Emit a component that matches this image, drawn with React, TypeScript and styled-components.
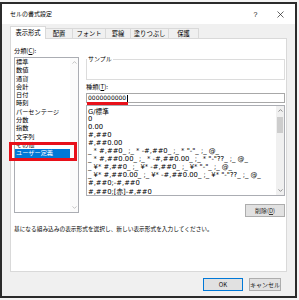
import React from 'react';
import styled, { createGlobalStyle } from 'styled-components';

const JP = `"Noto Sans CJK JP", "Noto Sans", sans-serif`;
const LAT = `"DejaVu Sans", "Noto Sans CJK JP", sans-serif`;

const Global = createGlobalStyle`
  html, body { margin: 0; padding: 0; background: #f4f4f4; }
  body { font-family: ${JP}; color: #000; }
  * { box-sizing: border-box; }
`;

const Screen = styled.div`
  width: 299px;
  height: 300px;
  padding: 2px 2px 2px 0;
  overflow: hidden;
`;

const Frame = styled.div`
  width: 297px;
  height: 296px;
  border: 2px solid #2b2b2b;
  display: flex;
  flex-direction: column;
  background: #f0f0f0;
`;

const TitleBar = styled.div`
  height: 20px;
  flex: none;
  background: #fff;
  display: flex;
  align-items: center;
  padding: 0 2px 0 8px;
`;

const Title = styled.span`
  flex: 1;
  font-size: 6px;
  line-height: 8px;
`;

const TitleButton = styled.div`
  width: 25px;
  height: 20px;
  display: flex;
  align-items: center;
  justify-content: center;
  font-family: "Liberation Sans", sans-serif;
  font-size: 7px;
  color: #111;
`;

const Body = styled.div`
  flex: 1;
  display: flex;
  flex-direction: column;
  padding: 2px 8px 0 8px;
`;

const TabRow = styled.div`
  height: 12px;
  flex: none;
  display: flex;
  align-items: flex-end;
  position: relative;
  z-index: 1;
`;

const Tab = styled.div<{ $active?: boolean; $w: number }>`
  width: ${(p) => p.$w}px;
  height: ${(p) => (p.$active ? 13 : 10)}px;
  margin-bottom: ${(p) => (p.$active ? -1 : 0)}px;
  margin-left: -1px;
  &:first-child { margin-left: 0; }
  background: ${(p) => (p.$active ? '#fff' : '#f0f0f0')};
  border: 1px solid #d9d9d9;
  border-bottom: none;
  display: flex;
  align-items: center;
  justify-content: center;
  font-size: 6.3px;
  line-height: 8px;
  white-space: nowrap;
  position: relative;
  z-index: ${(p) => (p.$active ? 2 : 1)};
`;

const Panel = styled.div`
  height: 234px;
  flex: none;
  background: #fff;
  border: 1px solid #d9d9d9;
  padding: 6px 1px 0 3px;
`;

const Columns = styled.div`
  display: grid;
  grid-template-columns: 65px 199px;
  column-gap: 7px;
  align-items: start;
`;

const Column = styled.div`
  display: flex;
  flex-direction: column;
`;

const FieldLabel = styled.div<{ $mt?: number; $h: number }>`
  margin-top: ${(p) => p.$mt ?? 0}px;
  height: ${(p) => p.$h}px;
  line-height: ${(p) => p.$h}px;
  font-size: 6.2px;
  white-space: nowrap;
`;

const ListBox = styled.div<{ $h: number; $mt: number }>`
  position: relative;
  margin-top: ${(p) => p.$mt}px;
  height: ${(p) => p.$h}px;
  border: 1px solid #abadb3;
  display: flex;
  background: #fff;
`;

const Items = styled.div<{ $pt?: number }>`
  flex: 1;
  min-width: 0;
  overflow: hidden;
  padding-top: ${(p) => p.$pt ?? 0}px;
`;

const CategoryItem = styled.div<{ $selected?: boolean }>`
  height: 8.3px;
  line-height: 8.3px;
  font-size: 6.2px;
  padding-left: 1px;
  white-space: nowrap;
  background: ${(p) => (p.$selected ? '#0078d7' : 'transparent')};
  color: ${(p) => (p.$selected ? '#fff' : '#000')};
`;

const FormatItem = styled.div`
  height: 8px;
  line-height: 8px;
  font-family: ${LAT};
  font-size: 6.8px;
  padding-left: 1px;
  white-space: pre;
`;

const FormatItemJp = styled.span`
  font-family: ${JP};
  font-size: 6.6px;
`;

const ScrollBar = styled.div<{ $track: string }>`
  width: 8px;
  flex: none;
  background: ${(p) => p.$track};
  display: flex;
  flex-direction: column;
`;

const ScrollArrow = styled.div`
  height: 9px;
  flex: none;
  display: flex;
  align-items: center;
  justify-content: center;
`;

const ScrollTrack = styled.div`
  flex: 1;
  padding: 2px 1px 0 1px;
`;

const Thumb = styled.div`
  height: 16px;
  background: #cdcdcd;
`;

const RedBox = styled.div`
  position: absolute;
  left: -6px;
  top: 84px;
  width: 68px;
  height: 19px;
  border: 3px solid #e8101a;
  pointer-events: none;
`;

const SampleBox = styled.div`
  position: relative;
  margin-top: 14px;
  height: 21px;
  border: 1px solid #dcdcdc;
`;

const SampleLegend = styled.span`
  position: absolute;
  top: -5px;
  left: 0;
  padding: 0 1px;
  background: #fff;
  font-size: 6px;
  line-height: 8px;
`;

const InputBox = styled.div`
  position: relative;
  margin-top: 1px;
  height: 10px;
  border: 1px solid #a8a8a8;
  display: flex;
  align-items: center;
  padding-left: 1px;
`;

const InputText = styled.span`
  font-family: ${LAT};
  font-size: 6px;
  line-height: 8px;
`;

const Caret = styled.span`
  width: 1px;
  height: 7px;
  background: #000;
  margin-left: 0.5px;
`;

const RedUnderline = styled.div`
  position: absolute;
  left: 0;
  top: 8px;
  width: 41px;
  height: 3px;
  background: #e8101a;
`;

const Button = styled.div<{ $w: number; $default?: boolean }>`
  width: ${(p) => p.$w}px;
  height: 13px;
  flex: none;
  background: #e1e1e1;
  border: 1px solid ${(p) => (p.$default ? '#0078d7' : '#adadad')};
  display: flex;
  align-items: center;
  justify-content: center;
  font-size: 6px;
  line-height: 8px;
  color: #111;
  white-space: nowrap;
`;

const DeleteButton = styled(Button)`
  align-self: flex-end;
  margin-top: 8px;
  color: #333;
`;

const Description = styled.div`
  margin-top: 8px;
  font-size: 5.7px;
  line-height: 8px;
  white-space: nowrap;
`;

const Footer = styled.div`
  flex: 1;
  display: flex;
  justify-content: flex-end;
  align-items: flex-start;
  gap: 6px;
  padding: 6px 6px 0 0;
`;

const Up = ({ c }: { c: string }) => (
  <svg width="5" height="3" viewBox="0 0 5 3">
    <polyline points="0.5,2.6 2.5,0.6 4.5,2.6" fill="none" stroke={c} strokeWidth="0.8" />
  </svg>
);
const Down = ({ c }: { c: string }) => (
  <svg width="5" height="3" viewBox="0 0 5 3">
    <polyline points="0.5,0.4 2.5,2.4 4.5,0.4" fill="none" stroke={c} strokeWidth="0.8" />
  </svg>
);

const categories = [
  '標準', '数値', '通貨', '会計', '日付', '時刻', 'パーセンテージ',
  '分数', '指数', '文字列', 'その他', 'ユーザー定義',
];

const formats: React.ReactNode[] = [
  <>G/<FormatItemJp>標準</FormatItemJp></>,
  '0',
  '0.00',
  '#,##0',
  '#,##0.00',
  '_ * #,##0_ ;_ * -#,##0_ ;_ * "-"_ ;_ @_ ',
  '_ * #,##0.00_ ;_ * -#,##0.00_ ;_ * "-"??_ ;_ @_ ',
  '_ ¥* #,##0_ ;_ ¥* -#,##0_ ;_ ¥* "-"_ ;_ @_ ',
  '_ ¥* #,##0.00_ ;_ ¥* -#,##0.00_ ;_ ¥* "-"??_ ;_ @_ ',
  '#,##0;-#,##0',
  <>#,##0;[<FormatItemJp>赤</FormatItemJp>]-#,##0</>,
];

const tabs = [
  { label: '表示形式', w: 36, active: true },
  { label: '配置', w: 28 },
  { label: 'フォント', w: 34 },
  { label: '罫線', w: 26 },
  { label: '塗りつぶし', w: 39 },
  { label: '保護', w: 31 },
];

export default function App() {
  return (
    <>
      <Global />
      <Screen>
        <Frame>
          <TitleBar>
            <Title>セルの書式設定</Title>
            <TitleButton>?</TitleButton>
            <TitleButton>
              <svg width="7" height="7" viewBox="0 0 7 7">
                <line x1="0.5" y1="0.5" x2="6.5" y2="6.5" stroke="#222" strokeWidth="0.7" />
                <line x1="6.5" y1="0.5" x2="0.5" y2="6.5" stroke="#222" strokeWidth="0.7" />
              </svg>
            </TitleButton>
          </TitleBar>
          <Body>
            <TabRow>
              {tabs.map((t) => (
                <Tab key={t.label} $w={t.w} $active={t.active}>
                  {t.label}
                </Tab>
              ))}
            </TabRow>
            <Panel>
              <Columns>
                <Column>
                  <FieldLabel $h={11}>
                    分類(<u>C</u>):
                  </FieldLabel>
                  <ListBox $h={156} $mt={1}>
                    <Items>
                      {categories.map((c, i) => (
                        <CategoryItem key={c} $selected={i === categories.length - 1}>
                          {c}
                        </CategoryItem>
                      ))}
                    </Items>
                    <ScrollBar $track="#fbfbfb">
                      <ScrollArrow>
                        <Up c="#b5b5b5" />
                      </ScrollArrow>
                      <ScrollTrack />
                      <ScrollArrow>
                        <Down c="#b5b5b5" />
                      </ScrollArrow>
                    </ScrollBar>
                    <RedBox />
                  </ListBox>
                </Column>
                <Column>
                  <SampleBox>
                    <SampleLegend>サンプル</SampleLegend>
                  </SampleBox>
                  <FieldLabel $mt={2} $h={10}>
                    種類(<u>T</u>):
                  </FieldLabel>
                  <InputBox>
                    <InputText>0000000000</InputText>
                    <Caret />
                    <RedUnderline />
                  </InputBox>
                  <ListBox $h={91} $mt={2}>
                    <Items $pt={1}>
                      {formats.map((f, i) => (
                        <FormatItem key={i}>{f}</FormatItem>
                      ))}
                    </Items>
                    <ScrollBar $track="#f0f0f0">
                      <ScrollArrow>
                        <Up c="#7a7a7a" />
                      </ScrollArrow>
                      <ScrollTrack>
                        <Thumb />
                      </ScrollTrack>
                      <ScrollArrow>
                        <Down c="#7a7a7a" />
                      </ScrollArrow>
                    </ScrollBar>
                  </ListBox>
                  <DeleteButton $w={40}>
                    削除(<u>D</u>)
                  </DeleteButton>
                </Column>
              </Columns>
              <Description>
                基になる組み込みの表示形式を選択し、新しい表示形式を入力してください。
              </Description>
            </Panel>
            <Footer>
              <Button $w={40} $default>
                OK
              </Button>
              <Button $w={32}>キャンセル</Button>
            </Footer>
          </Body>
        </Frame>
      </Screen>
    </>
  );
}
